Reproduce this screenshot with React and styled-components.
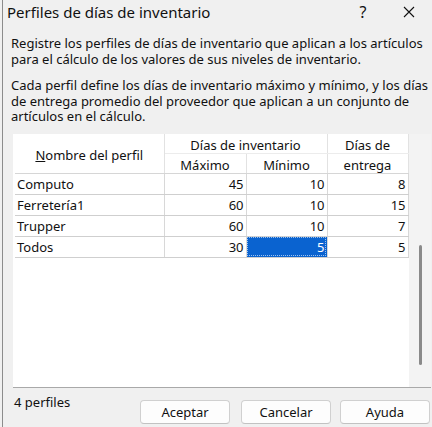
import React from "react";
import styled, { createGlobalStyle } from "styled-components";

const GlobalStyle = createGlobalStyle`
  html, body {
    margin: 0;
    padding: 0;
    background: #f0f0f0;
  }
  body {
    font-family: "Noto Sans", "Open Sans", sans-serif;
    color: #111;
  }
`;

const Window = styled.div`
  width: 430px;
  height: 427px;
  margin-left: 2px;
  border-left: 1px solid #8c8c8c;
  background: #f0f0f0;
  display: flex;
  flex-direction: column;
  box-sizing: border-box;
  overflow: hidden;
`;

const TitleBar = styled.div`
  height: 27px;
  display: flex;
  align-items: center;
  padding-left: 4px;
  padding-bottom: 1px;
  font-size: 15px;
  color: #111;
`;

const Title = styled.div`
  flex: 1;
  margin-top: -3px;
`;

const TitleButton = styled.div`
  width: ${(p) => p.w}px;
  display: flex;
  justify-content: center;
  align-items: center;
  font-size: 16px;
  margin-top: -3px;
`;

const Body = styled.div`
  padding: 8px 0 0 8px;
  flex: 1;
  display: flex;
  flex-direction: column;
`;

const Para = styled.p`
  margin: 0 0 ${(p) => p.mb}px 0;
  font-size: 13px;
  line-height: 15.5px;
`;

const GridFrame = styled.div`
  margin-top: 9px;
  margin-left: 2px;
  width: 418px;
  height: 254px;
  background: #fff;
  border-bottom: 1px solid #a9a9a9;
  display: flex;
  box-sizing: border-box;
`;

const GridArea = styled.div`
  flex: 1;
  padding: 0 0 0 2px;
`;

const Table = styled.table`
  border-collapse: collapse;
  font-size: 13px;
  table-layout: fixed;
`;

const HeadCell = styled.th`
  font-weight: normal;
  text-align: center;
  padding: 3px 0 0 0;
  height: ${(p) => p.h || 15}px;
  border-right: 1px solid #e2e2e2;
  border-bottom: 1px solid ${(p) => (p.strong ? "#d6d6d6" : "#ececec")};
  line-height: 16px;
  white-space: nowrap;
`;

const Cell = styled.td`
  height: 20px;
  padding: 0 2px 0 2px;
  text-align: ${(p) => (p.num ? "right" : "left")};
  border-right: 1px solid #d8d8d8;
  border-bottom: 1px solid #cfcfcf;
  white-space: nowrap;
  background: ${(p) => (p.selected ? "#0a63d0" : "transparent")};
  color: ${(p) => (p.selected ? "#fff" : "#111")};
  outline: ${(p) => (p.selected ? "1px dotted #9cc2f0" : "none")};
  outline-offset: -2px;
`;

const ScrollTrack = styled.div`
  width: 22px;
  background: #f3f3f3;
  position: relative;
`;

const ScrollThumb = styled.div`
  position: absolute;
  left: 10px;
  top: 111px;
  width: 3px;
  height: 120px;
  border-radius: 2px;
  background: #8a8a8a;
`;

const Footer = styled.div`
  display: flex;
  align-items: flex-start;
  margin-top: 4px;
  padding-right: 2px;
`;

const Count = styled.div`
  font-size: 13px;
  margin-left: 3px;
  margin-top: 1px;
  flex: 1;
`;

const Button = styled.button`
  width: 90px;
  height: 24px;
  margin-top: 8px;
  margin-left: ${(p) => p.ml || 0}px;
  background: #fdfdfd;
  border: 1px solid #d0d0d0;
  border-bottom-color: #c2c2c2;
  border-radius: 4px;
  font-family: inherit;
  font-size: 13px;
  color: #111;
  padding: 0;
`;

const rows = [
  { name: "Computo", max: 45, min: 10, ent: 8 },
  { name: "Ferretería1", max: 60, min: 10, ent: 15 },
  { name: "Trupper", max: 60, min: 10, ent: 7 },
  { name: "Todos", max: 30, min: 5, ent: 5, sel: true },
];

export default function App() {
  return (
    <>
      <GlobalStyle />
      <Window>
        <TitleBar>
          <Title>Perfiles de días de inventario</Title>
          <TitleButton w={46}>?</TitleButton>
          <TitleButton w={46}>
            <svg width="12" height="12" viewBox="0 0 12 12">
              <path d="M1 1 L11 11 M11 1 L1 11" stroke="#111" strokeWidth="1.1" />
            </svg>
          </TitleButton>
        </TitleBar>
        <Body>
          <Para mb={11}>
            Registre los perfiles de días de inventario que aplican a los artículos
            para el cálculo de los valores de sus niveles de inventario.
          </Para>
          <Para mb={0}>
            Cada perfil define los días de inventario máximo y mínimo, y los días
            de entrega promedio del proveedor que aplican a un conjunto de
            artículos en el cálculo.
          </Para>
          <GridFrame>
            <GridArea>
              <Table>
                <colgroup>
                  <col style={{ width: 149 }} />
                  <col style={{ width: 82 }} />
                  <col style={{ width: 81 }} />
                  <col style={{ width: 81 }} />
                </colgroup>
                <thead>
                  <tr>
                    <HeadCell rowSpan={2} strong>
                      <u>N</u>ombre del perfil
                    </HeadCell>
                    <HeadCell colSpan={2}>Días de inventario</HeadCell>
                    <HeadCell>Días de</HeadCell>
                  </tr>
                  <tr>
                    <HeadCell h={16} strong>Máximo</HeadCell>
                    <HeadCell h={16} strong>Mínimo</HeadCell>
                    <HeadCell h={16} strong>entrega</HeadCell>
                  </tr>
                </thead>
                <tbody>
                  {rows.map((r) => (
                    <tr key={r.name}>
                      <Cell>{r.name}</Cell>
                      <Cell num>{r.max}</Cell>
                      <Cell num selected={r.sel}>{r.min}</Cell>
                      <Cell num>{r.ent}</Cell>
                    </tr>
                  ))}
                </tbody>
              </Table>
            </GridArea>
            <ScrollTrack>
              <ScrollThumb />
            </ScrollTrack>
          </GridFrame>
          <Footer>
            <Count>4 perfiles</Count>
            <Button>Aceptar</Button>
            <Button ml={11}>Cancelar</Button>
            <Button ml={9}>Ayuda</Button>
          </Footer>
        </Body>
      </Window>
    </>
  );
}
